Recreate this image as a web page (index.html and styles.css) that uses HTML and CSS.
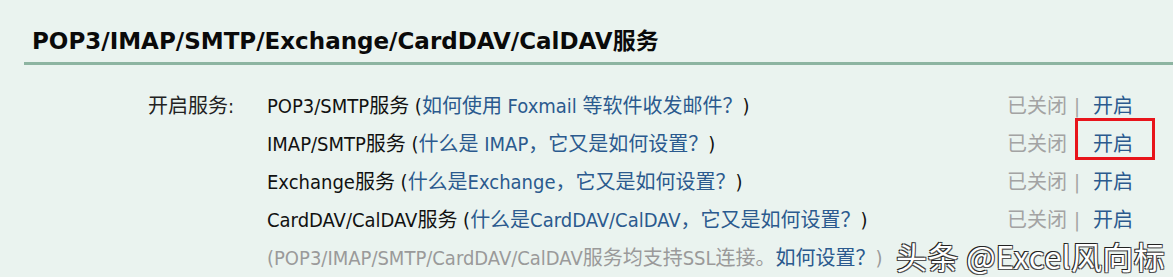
FILE: index.html
```html
<!DOCTYPE html>
<html lang="zh-CN">
<head>
<meta charset="utf-8">
<title>POP3/IMAP/SMTP/Exchange/CardDAV/CalDAV服务</title>
<link rel="stylesheet" href="styles.css">
</head>
<body>
<div class="page">
  <div class="section-head">
    <h2 class="section-title">POP3/IMAP/SMTP/Exchange/CardDAV/CalDAV服务</h2>
  </div>
  <div class="service-block">
    <div class="label">开启服务:</div>
    <div class="rows">
      <div class="row">
        <div class="desc">POP3/SMTP服务 (<a class="link" href="#">如何使用 Foxmail 等软件收发邮件？</a>)</div>
        <div class="actions"><span class="status">已关闭</span><span class="sep">|</span><a class="link open" href="#">开启</a></div>
      </div>
      <div class="row">
        <div class="desc">IMAP/SMTP服务 (<a class="link" href="#">什么是 IMAP，它又是如何设置？</a>)</div>
        <div class="actions"><span class="status">已关闭</span><span class="sep">|</span><a class="link open highlighted" href="#">开启</a></div>
      </div>
      <div class="row">
        <div class="desc">Exchange服务 (<a class="link" href="#">什么是Exchange，它又是如何设置？</a>)</div>
        <div class="actions"><span class="status">已关闭</span><span class="sep">|</span><a class="link open" href="#">开启</a></div>
      </div>
      <div class="row">
        <div class="desc">CardDAV/CalDAV服务 (<a class="link" href="#">什么是CardDAV/CalDAV，它又是如何设置？</a>)</div>
        <div class="actions"><span class="status">已关闭</span><span class="sep">|</span><a class="link open" href="#">开启</a></div>
      </div>
      <div class="row">
        <div class="desc note">(POP3/IMAP/SMTP/CardDAV/CalDAV服务均支持SSL连接。<a class="link" href="#">如何设置？</a>)</div>
      </div>
    </div>
  </div>
  <div class="watermark">头条 @Excel风向标</div>
</div>
</body>
</html>
```

FILE: styles.css
```css
html, body {
  margin: 0;
  padding: 0;
  background: #eaf3ef;
}
.page {
  position: relative;
  width: 1173px;
  height: 277px;
  overflow: hidden;
  font-family: "DejaVu Sans Condensed", "DejaVu Sans", "Noto Sans CJK SC", sans-serif;
  color: #111;
}
.section-head {
  margin-left: 24px;
  padding: 27px 0 7px 8px;
  border-bottom: 3px solid #8db4a1;
}
.section-title {
  margin: 0;
  font-family: "DejaVu Sans", "Noto Sans CJK SC", sans-serif;
  font-size: 23px;
  line-height: 28px;
  font-weight: bold;
  color: #0a0a0a;
}
.service-block {
  display: flex;
  padding: 22px 40px 0 148px;
  font-size: 20px;
}
.label {
  width: 119px;
  line-height: 38px;
  color: #222;
}
.rows {
  flex: 1;
  display: flex;
  flex-direction: column;
}
.row {
  display: flex;
  justify-content: space-between;
  align-items: center;
  height: 38px;
  line-height: 38px;
}
.desc {
  color: #111;
}
.link {
  color: #2b5a8e;
  text-decoration: none;
}
.note {
  color: #9a9a9a;
}
.actions {
  display: flex;
  align-items: center;
}
.status {
  color: #a3a3a3;
}
.sep {
  color: #a3a3a3;
  margin: 0 13px 0 7px;
}
.open {
  position: relative;
  display: inline-block;
}
.highlighted::after {
  content: "";
  position: absolute;
  left: -18px;
  right: -22px;
  top: -7px;
  bottom: 3px;
  border: 3px solid #e8141b;
  background: transparent;
}
.watermark {
  position: absolute;
  left: 896px;
  top: 236px;
  font-family: "Noto Sans CJK SC", sans-serif;
  font-size: 31px;
  line-height: 40px;
  letter-spacing: 0.4px;
  color: #fff;
  text-shadow: -1px -1px 0 #222, 1px 1px 0 #555, 1px -1px 0 #444, -1px 1px 0 #444;
}
```
